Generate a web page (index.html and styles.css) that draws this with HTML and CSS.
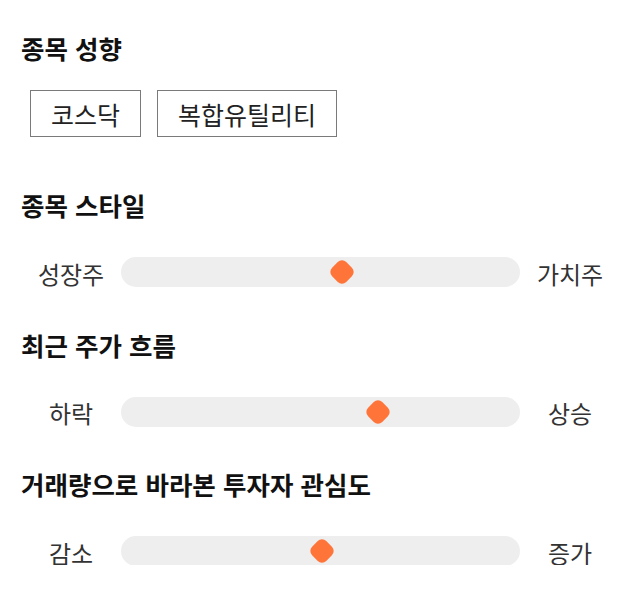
FILE: index.html
```html
<!DOCTYPE html>
<html lang="ko">
<head>
<meta charset="utf-8">
<link rel="stylesheet" href="styles.css">
</head>
<body>
<div class="page">
  <h2 class="title first">종목 성향</h2>
  <div class="tags">
    <span class="tag">코스닥</span>
    <span class="tag">복합유틸리티</span>
  </div>

  <h2 class="title">종목 스타일</h2>
  <div class="slider-row">
    <span class="label">성장주</span>
    <div class="track"><span class="thumb" style="left:55.4%"></span></div>
    <span class="label">가치주</span>
  </div>

  <h2 class="title">최근 주가 흐름</h2>
  <div class="slider-row">
    <span class="label">하락</span>
    <div class="track"><span class="thumb" style="left:64.5%"></span></div>
    <span class="label">상승</span>
  </div>

  <h2 class="title">거래량으로 바라본 투자자 관심도</h2>
  <div class="slider-row">
    <span class="label">감소</span>
    <div class="track"><span class="thumb" style="left:50.4%"></span></div>
    <span class="label">증가</span>
  </div>
</div>
</body>
</html>
```

FILE: styles.css
```css
html, body {
  margin: 0;
  padding: 0;
  background: #ffffff;
}
body {
  font-family: "Noto Sans CJK KR", "Noto Sans", sans-serif;
  color: #111;
}
.page {
  padding: 33px 20px 0 21px;
}
.title {
  margin: 44px 0 0 0;
  font-size: 25.5px;
  font-weight: 700;
  line-height: 30px;
  color: #111;
}
.title.first {
  margin-top: 0;
}
.tags + .title {
  margin-top: 53px;
}
.tags {
  display: flex;
  gap: 16px;
  margin: 27px 0 0 9px;
}
.tag {
  display: flex;
  align-items: center;
  justify-content: center;
  height: 45px;
  padding: 0 20px;
  border: 1px solid #7a7a7a;
  font-size: 25px;
  color: #222;
}
.slider-row {
  display: grid;
  grid-template-columns: 100px 1fr 100px;
  align-items: center;
  margin-top: 35.5px;
  height: 30px;
}
.label {
  text-align: center;
  font-size: 24px;
  color: #333;
  line-height: 30px;
  padding-top: 3px;
}
.track {
  position: relative;
  height: 30px;
  background: #eeeeee;
  border-radius: 15px;
}
.thumb {
  position: absolute;
  top: 50%;
  width: 20px;
  height: 20px;
  background: #ff7438;
  border-radius: 6px;
  transform: translate(-50%, -50%) rotate(45deg);
}
```
